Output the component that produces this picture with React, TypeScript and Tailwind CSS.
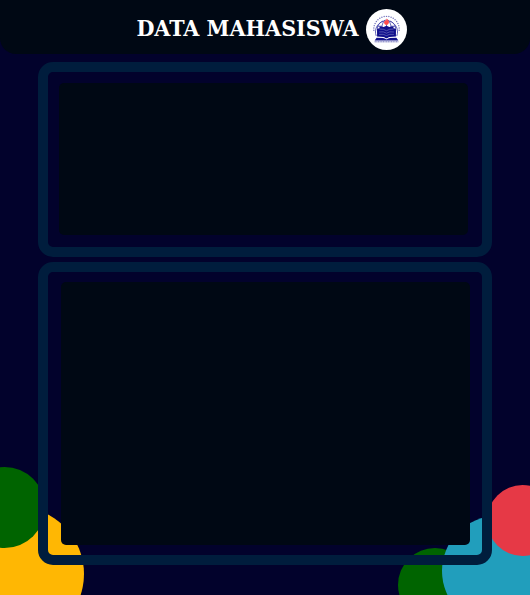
function Logo() {
  const dots = Array.from({ length: 19 }, (_, i) => {
    const angle = Math.PI * 0.97 + (i * Math.PI * 1.06) / 18;
    return { x: 50 + Math.cos(angle) * 31, y: 49 + Math.sin(angle) * 31 };
  });
  return (
    <svg viewBox="0 0 100 100" className="h-[41px] w-[41px] shrink-0" role="img" aria-label="University logo">
      <circle cx="50" cy="50" r="50" fill="#ffffff" />
      {dots.map((d, i) => (
        <circle key={i} cx={d.x} cy={d.y} r="1.8" fill="#7474bc" />
      ))}
      <g fill="none" stroke="#4444aa" strokeWidth="2">
        <path d="M25 66a27 27 0 1 1 50 0" />
        <path d="M31 62a21 22 0 0 1 11-33M69 62a21 22 0 0 0-11-33" />
        <path d="M39 45c0-8 3-14 8-19M61 45c0-8-3-14-8-19M27 42h12M61 42h12M50 38v8" />
      </g>
      <path d="M50 23c4 4 7 6 6 10-1 4-3 6-6 6s-6-2-6-6c0-3 3-4 3-6l2 2z" fill="#ff4d4d" />
      <path d="M33 42l10 2 7-3 7 3 10-2v5l6 1v19l-16 1-7 4-7-4-16-1V48l6-1z" fill="#10108c" />
      <path d="M33 49q10-1 17 4 7-5 17-4M32 56q11-2 18 3 7-5 18-3M32 62q11-2 18 3 7-5 18-3" fill="none" stroke="#8f8fd0" strokeWidth="1.3" />
      <path d="M26 70l19 1 5 3 5-3 19-1 5 7H21z" fill="#10108c" />
      <path d="M42 70l8 3 8-3" fill="none" stroke="#ffffff" strokeWidth="1.5" />
      <path d="M21 80h58" stroke="#4b4ba8" strokeWidth="2" strokeDasharray="3 1" />
    </svg>
  );
}

function Backdrop() {
  return (
    <div aria-hidden="true" className="pointer-events-none absolute inset-0 overflow-hidden">
      <div className="absolute -bottom-[46px] -left-[50px] h-[134px] w-[134px] rounded-full bg-[#ffb703]" />
      <div className="absolute bottom-[47px] -left-[36px] h-[81px] w-[81px] rounded-full bg-[#006400]" />
      <div className="absolute -bottom-[27px] right-[58px] h-[74px] w-[74px] rounded-full bg-[#006400]" />
      <div className="absolute -bottom-[31px] -right-[22px] h-[110px] w-[110px] rounded-full bg-[#219ebc]" />
      <div className="absolute bottom-[39px] -right-[28px] h-[71px] w-[71px] rounded-full bg-[#e63946]" />
    </div>
  );
}

export default function App() {
  return (
    <div className="relative min-h-screen overflow-hidden bg-[#02022c] pb-[30px]">
      <Backdrop />
      <header className="relative flex items-start justify-center gap-[7px] rounded-b-2xl bg-[#000814] pt-[9px] pb-1 pl-[13px]">
        <h1 className="font-['Roboto_Slab','DejaVu_Serif_Condensed','DejaVu_Serif',serif] text-[23px] leading-[38px] font-bold whitespace-nowrap text-white">
          DATA MAHASISWA
        </h1>
        <Logo />
      </header>
      <main className="relative mx-[38px] mt-2 flex flex-col gap-[5px]">
        <section className="rounded-[15px] border-10 border-[#001d3d] pt-[11px] pr-[14px] pb-3 pl-[11px]">
          <div className="h-[152px] rounded-[5px] bg-[#000814]" />
        </section>
        <section className="rounded-[15px] border-10 border-[#001d3d] py-[10px] pr-3 pl-[13px]">
          <div className="h-[263px] rounded-[5px] bg-[#000814]" />
        </section>
      </main>
    </div>
  );
}
